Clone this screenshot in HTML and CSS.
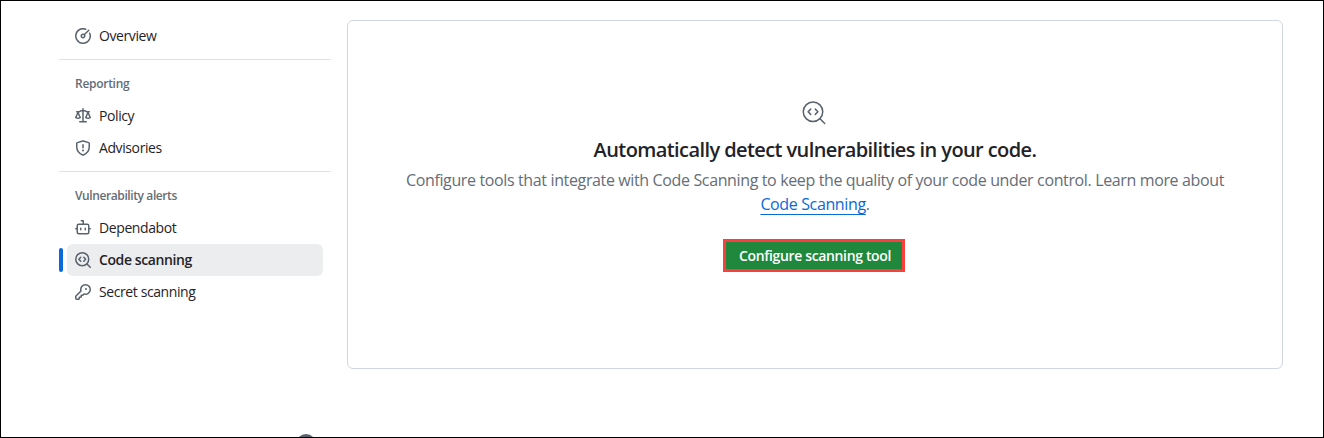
FILE: index.html
```html
<!DOCTYPE html>
<html lang="en">
<head>
<meta charset="utf-8">
<title>Code scanning</title>
<link rel="stylesheet" href="styles.css">
</head>
<body>
<svg class="sprite" aria-hidden="true">
  <symbol id="codescan" viewBox="0 0 16 16"><g fill="none" stroke="currentColor" stroke-width="1.5" stroke-linecap="round" stroke-linejoin="round"><circle cx="7.25" cy="7.25" r="6.5"/><path d="m12 12 3.25 3.25M5.7 5.3 3.9 7.25l1.8 1.95M8.8 5.3l1.8 1.95-1.8 1.95"/></g></symbol>
</svg>
<div class="page">
  <nav class="sidebar">
    <a class="item"><svg class="icon" viewBox="0 0 16 16"><path d="M8 1.5a6.5 6.5 0 1 0 6.016 4.035.75.75 0 0 1 1.388-.57 8 8 0 1 1-4.37-4.37.75.75 0 0 1-.569 1.389A6.473 6.473 0 0 0 8 1.5Zm6.28.22a.75.75 0 0 1 0 1.06l-4.063 4.064a2.5 2.5 0 1 1-1.06-1.06L13.22 1.72a.75.75 0 0 1 1.06 0ZM7 8a1 1 0 1 0 2 0 1 1 0 0 0-2 0Z"/></svg><span class="label">Overview</span></a>
    <section class="group">
      <h3 class="heading">Reporting</h3>
      <a class="item"><svg class="icon" viewBox="0 0 16 16"><path d="M8.75.75V2h.985c.304 0 .603.08.867.231l1.29.736c.038.022.08.033.124.033h2.234a.75.75 0 0 1 0 1.5h-.427l2.111 4.692a.75.75 0 0 1-.154.838l-.53-.53.529.531-.001.002-.002.002-.006.006-.006.005-.01.01-.045.04c-.21.176-.441.327-.686.45C14.556 10.78 13.88 11 13 11a4.498 4.498 0 0 1-2.023-.454 3.544 3.544 0 0 1-.686-.45l-.045-.04-.016-.015-.006-.006-.004-.004v-.001a.75.75 0 0 1-.154-.838L12.178 4.5h-.162c-.305 0-.604-.079-.868-.231l-1.29-.736a.245.245 0 0 0-.124-.033H8.75V13h2.5a.75.75 0 0 1 0 1.5h-6.5a.75.75 0 0 1 0-1.5h2.5V3.5h-.984a.245.245 0 0 0-.124.033l-1.289.737c-.265.15-.564.23-.869.23h-.162l2.112 4.692a.75.75 0 0 1-.154.838l-.53-.53.529.531-.001.002-.002.002-.006.006-.016.015-.045.04c-.21.176-.441.327-.686.45C4.556 10.78 3.88 11 3 11a4.498 4.498 0 0 1-2.023-.454 3.544 3.544 0 0 1-.686-.45l-.045-.04-.016-.015-.006-.006-.004-.004v-.001a.75.75 0 0 1-.154-.838L2.178 4.5H1.75a.75.75 0 0 1 0-1.5h2.234a.249.249 0 0 0 .125-.033l1.288-.737c.265-.15.564-.23.869-.23h.984V.75a.75.75 0 0 1 1.5 0Zm2.945 8.477c.285.135.718.273 1.305.273s1.02-.138 1.305-.273L13 6.327Zm-10 0c.285.135.718.273 1.305.273s1.02-.138 1.305-.273L3 6.327Z"/></svg><span class="label">Policy</span></a>
      <a class="item"><svg class="icon" viewBox="0 0 16 16"><path fill="none" stroke="currentColor" stroke-width="1.5" stroke-linecap="round" d="M7.7.95a1 1 0 0 1 .6 0l5.25 1.68c.42.13.7.52.7.95V7c0 3.6-2.2 6.4-5.85 7.95a1 1 0 0 1-.8 0C3.95 13.4 1.75 10.6 1.75 7V3.58c0-.43.28-.82.7-.95ZM8 4.75v3"/><circle cx="8" cy="10.5" r="1"/></svg><span class="label">Advisories</span></a>
    </section>
    <section class="group">
      <h3 class="heading alerts">Vulnerability alerts</h3>
      <a class="item"><svg class="icon" viewBox="0 0 16 16"><path d="M5.75 7.5a.75.75 0 0 1 .75.75v1.5a.75.75 0 0 1-1.5 0v-1.5a.75.75 0 0 1 .75-.75Zm5.25.75a.75.75 0 0 0-1.5 0v1.5a.75.75 0 0 0 1.5 0v-1.5Z"/><path d="M6.25 0h2A.75.75 0 0 1 9 .75V3.5h3.25a2.25 2.25 0 0 1 2.25 2.25V8h.75a.75.75 0 0 1 0 1.5h-.75v2.75a2.25 2.25 0 0 1-2.25 2.25h-8.5a2.25 2.25 0 0 1-2.25-2.25V9.5H.75a.75.75 0 0 1 0-1.5h.75V5.75A2.25 2.25 0 0 1 3.75 3.5H7.5v-2H6.25a.75.75 0 0 1 0-1.5ZM3 5.75v6.5c0 .414.336.75.75.75h8.5a.75.75 0 0 0 .75-.75v-6.5a.75.75 0 0 0-.75-.75h-8.5a.75.75 0 0 0-.75.75Z"/></svg><span class="label">Dependabot</span></a>
      <a class="item active"><svg class="icon"><use href="#codescan"/></svg><span class="label">Code scanning</span></a>
      <a class="item"><svg class="icon" viewBox="0 0 16 16"><path d="M10.5 0a5.499 5.499 0 1 1-1.288 10.848l-.932.932a.749.749 0 0 1-.53.22H7v.75a.749.749 0 0 1-.22.53l-.5.5a.749.749 0 0 1-.53.22H5v.75a.749.749 0 0 1-.22.53l-.5.5a.749.749 0 0 1-.53.22h-2A1.75 1.75 0 0 1 0 14.25v-2c0-.199.079-.389.22-.53l4.932-4.932A5.5 5.5 0 0 1 10.5 0Zm-4 5.5c-.001.431.069.86.205 1.269a.75.75 0 0 1-.181.768L1.5 12.56v1.69c0 .138.112.25.25.25h1.69l.06-.06v-1.19a.75.75 0 0 1 .75-.75h1.19l.06-.06v-1.19a.75.75 0 0 1 .75-.75h1.19l1.023-1.025a.75.75 0 0 1 .768-.18A4 4 0 1 0 6.5 5.5ZM11 6a1 1 0 1 1 0-2 1 1 0 0 1 0 2Z"/></svg><span class="label">Secret scanning</span></a>
    </section>
  </nav>
  <main class="panel">
    <svg class="hero-icon" viewBox="0 0 24 24"><g fill="none" stroke="currentColor" stroke-width="1.5" stroke-linecap="round" stroke-linejoin="round"><circle cx="11" cy="10.75" r="9.75"/><path d="m18 17.75 4.7 4.7M8.7 8.1 6.1 10.75l2.6 2.65M13.3 8.1l2.6 2.65-2.6 2.65"/></g></svg>
    <h2 class="title">Automatically detect vulnerabilities in your code.</h2>
    <p class="copy">Configure tools that integrate with Code Scanning to keep the quality of your code under control. Learn more about<br><a class="link">Code Scanning</a>.</p>
    <button class="button">Configure scanning tool</button>
  </main>
  <div class="mark"></div>
</div>
</body>
</html>
```
FILE: styles.css
```css
* { box-sizing: border-box; }
body { margin: 0; background: #fff; color: #1f2328; font-family: "Open Sans", "Noto Sans", sans-serif; }
.sprite { position: absolute; width: 0; height: 0; }
.page { position: relative; display: flex; align-items: flex-start; gap: 16px; width: 1324px; height: 438px; padding: 19px 40px 0 58px; border: 1px solid #000; overflow: hidden; }
.sidebar { width: 272px; }
.item { position: relative; display: flex; align-items: center; gap: 8px; width: 256px; height: 32px; margin-left: 8px; padding: 0 8px; border-radius: 6px; font-size: 14px; line-height: 20px; letter-spacing: -0.4px; white-space: nowrap; }
.icon { flex: none; width: 16px; height: 16px; fill: #59636e; color: #59636e; }
.active { background: #ecedef; font-weight: 600; }
.active::before { content: ""; position: absolute; left: -8px; top: 4px; width: 4px; height: 24px; border-radius: 3px; background: #0969da; }
.group { margin-top: 7px; padding-top: 15px; border-top: 1px solid #dfe1e4; }
.heading { margin: 0 0 7px 16px; font-size: 12px; font-weight: 600; line-height: 18px; letter-spacing: -0.28px; color: #656d76; white-space: nowrap; }
.alerts { letter-spacing: -0.4px; }
.panel { display: flex; flex-direction: column; align-items: center; width: 936px; height: 349px; padding: 80px 2px 0 0; border: 1px solid #d0d7de; border-radius: 6px; }
.hero-icon { flex: none; width: 24px; height: 24px; color: #59636e; }
.title { margin: 10px 0 0; padding-left: 2px; font-size: 20px; font-weight: 560; line-height: 30px; letter-spacing: -0.59px; white-space: nowrap; }
.copy { margin: 3px 0 0; padding-left: 2px; font-size: 16px; line-height: 24px; letter-spacing: -0.365px; text-align: center; color: #656d76; white-space: nowrap; }
.link { color: #0969da; text-decoration: underline; text-underline-offset: 4px; text-decoration-thickness: 1px; }
.button { width: 182px; height: 33px; margin: 23px 0 0; padding: 1px 0 0 2px; border: 3px solid #f9403f; background: #1f883d; color: #fff; font: 600 14px/20px "Open Sans", "Noto Sans", sans-serif; letter-spacing: -0.35px; white-space: nowrap; }
.mark { position: absolute; left: 295px; top: 433px; width: 20px; height: 20px; border-radius: 50%; background: #59636e; }
```
